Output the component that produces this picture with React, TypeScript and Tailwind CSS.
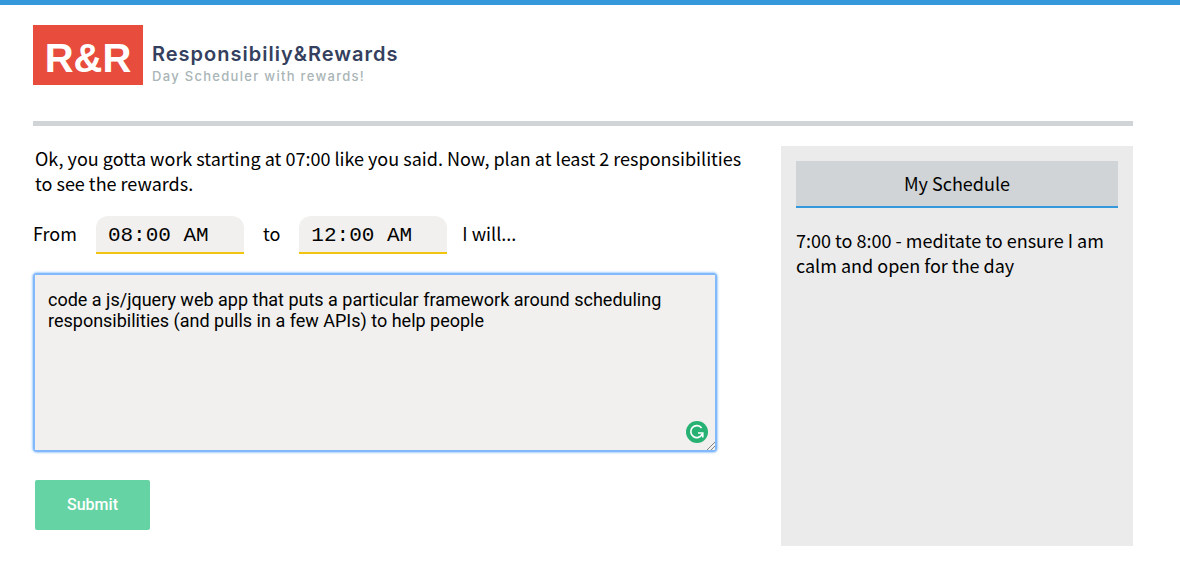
import type { FormEvent } from "react";

const timeInput =
  "h-[38px] w-[148px] rounded-t-xl border-b-2 border-[#f1c40f] bg-[#f1f0ee] px-3 pt-0.5 font-['Liberation_Mono',monospace] text-[21px] font-medium text-black outline-none";

function AssistantBadge() {
  return (
    <svg className="absolute right-[7px] bottom-[7px] size-[22px]" viewBox="0 0 22 22" fill="none" aria-hidden="true">
      <circle cx="11" cy="11" r="11" fill="#27b173" />
      <path d="M15.6 7A6 6 0 1 0 16.2 13.2" stroke="#fff" strokeWidth="1.6" />
      <path d="M12 12h4.8v4.4" stroke="#fff" strokeWidth="1.6" />
    </svg>
  );
}

function ResizeGrip() {
  return (
    <svg className="absolute right-0 bottom-0 size-2" viewBox="0 0 8 8" fill="none" aria-hidden="true">
      <path d="M0 8 8 0M4 8l4-4" stroke="#666" strokeWidth="0.8" />
    </svg>
  );
}

export default function App() {
  const onSubmit = (event: FormEvent) => event.preventDefault();

  return (
    <div className="min-h-screen border-t-[5px] border-[#3498db] bg-white pt-5 pr-[47px] pb-8 pl-[33px] font-['Noto_Sans_CJK_SC','Noto_Sans',sans-serif] text-lg leading-[25px] text-black">
      <header className="flex items-start gap-[9px] border-b-5 border-[#d0d4d7] pb-[35px]">
        <div className="flex h-[60px] w-[110px] items-center justify-center bg-[#e74c3c] pt-1.5 font-['Liberation_Sans',sans-serif] text-[40px] font-bold text-white">
          R&amp;R
        </div>
        <div className="pt-[17px] font-['Inter',sans-serif]">
          <h1 className="text-xl leading-6 font-semibold tracking-wider text-[#34405e]">Responsibiliy&amp;Rewards</h1>
          <p className="text-[13px] leading-5 font-medium tracking-widest text-[#a9b5b6]">Day Scheduler with rewards!</p>
        </div>
      </header>

      <main className="flex items-start gap-9 pt-5">
        <form className="min-w-0 flex-1" onSubmit={onSubmit}>
          <p className="pl-0.5">
            Ok, you gotta work starting at 07:00 like you said. Now, plan at least 2 responsibilities to see the rewards.
          </p>

          <div className="mt-5 flex items-baseline">
            <label htmlFor="from" className="mr-[19px]">From</label>
            <input id="from" type="text" defaultValue="08:00 AM" className={timeInput} />
            <label htmlFor="to" className="mx-[19px]">to</label>
            <input id="to" type="text" defaultValue="12:00 AM" className={timeInput} />
            <label htmlFor="plan" className="ml-[15px]">I will...</label>
          </div>

          <div className="relative mt-[21px] mr-[30px] ml-0.5 rounded-xs shadow-[0_0_0_2px_#82b9fb,0_0_2px_3px_#a9d0fc]">
            <textarea
              id="plan"
              className="block h-[175px] w-full resize-none bg-[#f1f0ee] px-[13px] py-3.5 font-['Roboto',sans-serif] text-lg leading-[21px] text-black outline-none"
              defaultValue="code a js/jquery web app that puts a particular framework around scheduling responsibilities (and pulls in a few APIs) to help people"
            />
            <AssistantBadge />
            <ResizeGrip />
          </div>

          <button
            type="submit"
            className="mt-[30px] ml-0.5 h-[50px] w-[115px] rounded-xs bg-[#66d3a4] font-['Roboto',sans-serif] text-base font-medium text-white"
          >
            Submit
          </button>
        </form>

        <aside className="min-h-[400px] w-[352px] shrink-0 bg-[#ebebeb] p-[15px]">
          <h2 className="border-b-2 border-[#3498db] bg-[#d0d4d7] py-2.5 text-center">My Schedule</h2>
          <p className="mt-5">7:00 to 8:00 - meditate to ensure I am calm and open for the day</p>
        </aside>
      </main>
    </div>
  );
}
